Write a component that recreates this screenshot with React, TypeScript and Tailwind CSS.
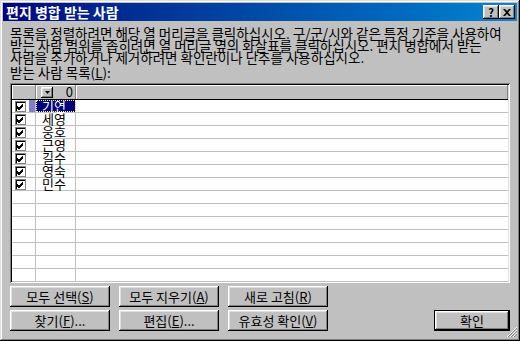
import type { ReactNode } from "react";

const FONT = { fontFamily: '"Noto Sans CJK KR", "Noto Sans", sans-serif' };

const NAMES = ["기연", "세영", "웅호", "근영", "길수", "영숙", "민수"];
const ROWS = 14;

const LINES = [
  "목록을 정렬하려면 해당 열 머리글을 클릭하십시오. 구/군/시와 같은 특정 기준을 사용하여",
  "받는 사람 범위를 좁히려면 열 머리글 옆의 화살표를 클릭하십시오. 편지 병합에서 받는",
  "사람을 추가하거나 제거하려면 확인란이나 단추를 사용하십시오.",
];

// classic raised 3D edge
const RAISED =
  "shadow-[inset_-1px_-1px_#000,inset_1px_1px_#fff,inset_-2px_-2px_#808080,inset_2px_2px_#dfdfdf]";

function Key({ children }: { children: ReactNode }) {
  return <span className="underline underline-offset-[1px]">{children}</span>;
}

function Btn({ children, wide = true }: { children: ReactNode; wide?: boolean }) {
  return (
    <button
      className={`h-[21px] bg-[#c0c0c0] text-[13px] leading-[13px] text-black ${RAISED} ${
        wide ? "w-[100px]" : "w-[76px] border border-black"
      }`}
    >
      {children}
    </button>
  );
}

function Check() {
  return (
    <span className="flex h-[11px] w-[11px] items-center justify-center border border-[#808080] bg-white shadow-[inset_1px_1px_#000]">
      <svg width="9" height="9" viewBox="0 0 9 9">
        <path d="M1 4 L3 6 L7 2 M1 5 L3 7 L7 3 M1 6 L3 8 L7 4" stroke="#000" strokeWidth="1" fill="none" />
      </svg>
    </span>
  );
}

function Row({ index }: { index: number }) {
  const name = NAMES[index];
  const sel = index === 0;
  return (
    <div className="flex h-[13px] border-b border-[#c0c0c0]">
      <div className="flex w-[24px] items-center border-r border-[#c0c0c0] pl-[3px]">
        {name && <Check />}
        {sel && <span className="ml-[3px] h-full flex-1 bg-[#8080c8]" />}
      </div>
      <div
        className={`w-[40px] whitespace-nowrap border-r border-[#c0c0c0] pl-[6px] text-[13px] leading-[12px] ${
          sel ? "bg-[#000080] text-white outline-1 outline-dotted outline-[#ffff80] -outline-offset-1" : "text-black"
        }`}
      >
        {name}
      </div>
      <div className="flex-1" />
    </div>
  );
}

export default function App() {
  return (
    <div
      className="flex h-[341px] w-[520px] flex-col bg-[#c0c0c0] p-[3px] shadow-[inset_-1px_-1px_#000,inset_1px_1px_#dfdfdf,inset_-2px_-2px_#808080,inset_2px_2px_#fff]"
      style={FONT}
    >
      {/* title bar */}
      <div className="flex h-[18px] items-center bg-linear-to-r from-[#000080] to-[#1084d0] pl-[3px] pr-[2px]">
        <span className="flex-1 text-[14px] font-bold leading-[14px] text-white">편지 병합 받는 사람</span>
        <span className={`flex h-[14px] w-[16px] items-center justify-center bg-[#c0c0c0] text-[11px] font-bold leading-none ${RAISED}`}>
          ?
        </span>
        <span className={`flex h-[14px] w-[16px] items-center justify-center bg-[#c0c0c0] ${RAISED}`}>
          <svg width="8" height="7" viewBox="0 0 8 7">
            <path d="M0 0h2l2 2 2-2h2L5 3.5 8 7H6L4 5 2 7H0l3-3.5z" fill="#000" />
          </svg>
        </span>
      </div>

      <div className="flex flex-1 flex-col px-[7px]">
        <div className="mt-[6px] text-[13.5px] leading-[12px] text-black">
          {LINES.map((l) => (
            <div key={l} className="whitespace-nowrap">
              {l}
            </div>
          ))}
        </div>
        <div className="mt-[3px] text-[13.5px] leading-[12px] text-black">
          받는 사람 목록(<Key>L</Key>):
        </div>

        {/* list */}
        <div className="mt-[5px] h-[200px] w-[500px] overflow-hidden bg-white p-[2px] shadow-[inset_1px_1px_#808080,inset_-1px_-1px_#fff,inset_2px_2px_#000,inset_-2px_-2px_#dfdfdf]">
          <div className="flex h-[15px] border-b border-black bg-[#c0c0c0]">
            <div className="w-[24px] border-r border-[#808080] shadow-[inset_1px_1px_#fff]" />
            <div className="flex w-[40px] items-center border-r border-[#808080] pl-[5px] pr-[2px] shadow-[inset_1px_1px_#fff]">
              <span className={`flex h-[11px] w-[12px] items-center justify-center bg-[#c0c0c0] ${RAISED}`}>
                <svg width="5" height="3" viewBox="0 0 5 3">
                  <path d="M0 0h5L2.5 3z" fill="#000" />
                </svg>
              </span>
              <span className="ml-auto text-[13px] leading-[12px] text-black">0</span>
            </div>
            <div className="flex-1 border-r border-[#808080] shadow-[inset_1px_1px_#fff]" />
          </div>
          {Array.from({ length: ROWS }, (_, i) => (
            <Row key={i} index={i} />
          ))}
        </div>

        {/* buttons */}
        <div className="mt-[3px] flex gap-[9px]">
          <Btn>
            모두 선택(<Key>S</Key>)
          </Btn>
          <Btn>
            모두 지우기(<Key>A</Key>)
          </Btn>
          <Btn>
            새로 고침(<Key>R</Key>)
          </Btn>
        </div>
        <div className="mt-[3px] flex gap-[9px]">
          <Btn>
            찾기(<Key>F</Key>)...
          </Btn>
          <Btn>
            편집(<Key>E</Key>)...
          </Btn>
          <Btn>
            유효성 확인(<Key>V</Key>)
          </Btn>
          <div className="flex-1" />
          <Btn wide={false}>확인</Btn>
        </div>
        <div className="relative flex-1">
          <svg className="absolute bottom-[0px] right-[-8px]" width="12" height="12" viewBox="0 0 12 12">
            <path d="M11 1L1 11M11 4L4 11M11 7L7 11" stroke="#fff" />
            <path d="M11 2L2 11M11 5L5 11M11 8L8 11" stroke="#808080" />
          </svg>
        </div>
      </div>
    </div>
  );
}
